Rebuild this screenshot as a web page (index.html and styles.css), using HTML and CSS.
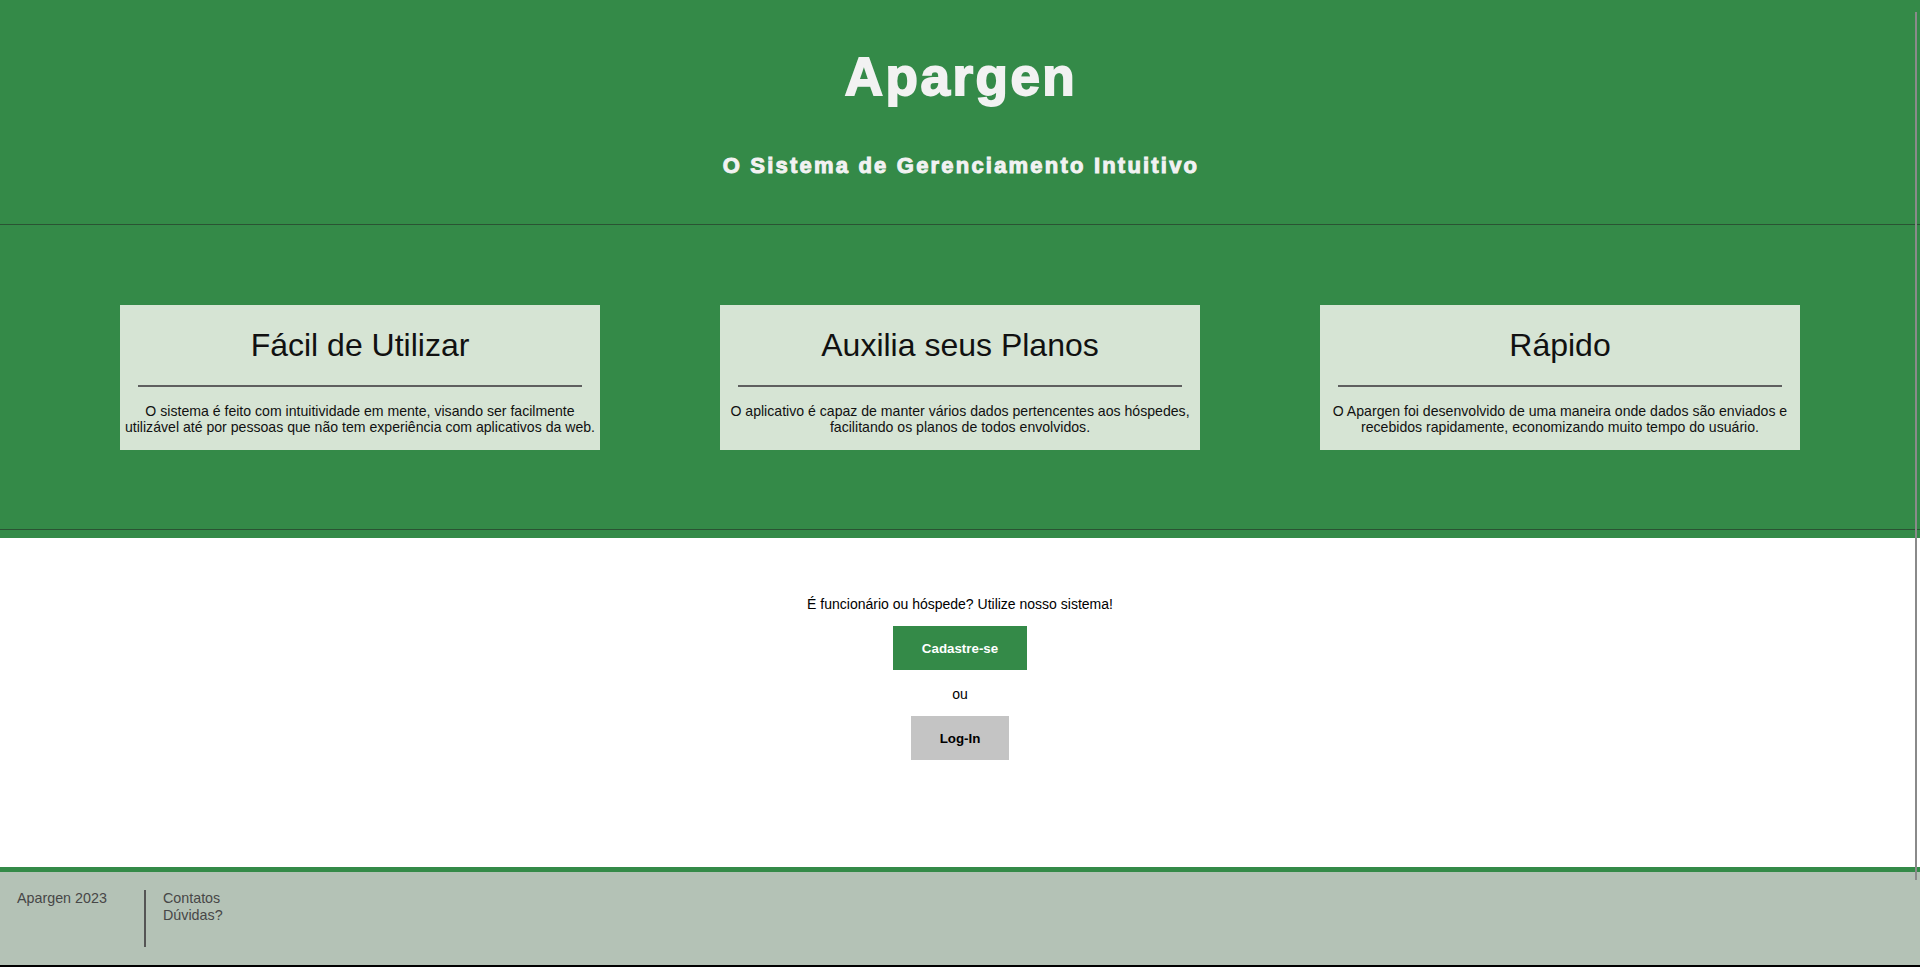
FILE: index.html
```html
<!DOCTYPE html>
<html lang="pt-BR">
<head>
<meta charset="utf-8">
<title>Apargen</title>
<link rel="stylesheet" href="styles.css">
</head>
<body>
<div class="green-wrap">
  <header class="hero">
    <h1 class="brand">Apargen</h1>
    <h2 class="tagline">O Sistema de Gerenciamento Intuitivo</h2>
  </header>
  <section class="features">
    <article class="card">
      <h3 class="card-title">Fácil de Utilizar</h3>
      <hr class="card-rule">
      <p class="card-text">O sistema é feito com intuitividade em mente, visando ser facilmente utilizável até por pessoas que não tem experiência com aplicativos da web.</p>
    </article>
    <article class="card">
      <h3 class="card-title">Auxilia seus Planos</h3>
      <hr class="card-rule">
      <p class="card-text">O aplicativo é capaz de manter vários dados pertencentes aos hóspedes, facilitando os planos de todos envolvidos.</p>
    </article>
    <article class="card">
      <h3 class="card-title">Rápido</h3>
      <hr class="card-rule">
      <p class="card-text">O Apargen foi desenvolvido de uma maneira onde dados são enviados e recebidos rapidamente, economizando muito tempo do usuário.</p>
    </article>
  </section>
</div>
<main class="cta">
  <p class="cta-text">É funcionário ou hóspede? Utilize nosso sistema!</p>
  <button class="btn btn-primary">Cadastre-se</button>
  <p class="cta-or">ou</p>
  <button class="btn btn-secondary">Log-In</button>
</main>
<footer class="footer">
  <div class="footer-col footer-brand">Apargen 2023</div>
  <div class="footer-col footer-links">
    <span>Contatos</span>
    <span>Dúvidas?</span>
  </div>
</footer>
<div class="scroll-line"></div>
</body>
</html>
```
FILE: styles.css
```css
* { box-sizing: border-box; }

html, body {
  margin: 0;
  padding: 0;
  background: #ffffff;
  font-family: "Liberation Sans", Arial, sans-serif;
}

.green-wrap {
  background: #348a48;
  padding-bottom: 8px;
}

.hero {
  display: flex;
  flex-direction: column;
  align-items: center;
  padding: 46px 0 45px;
  border-bottom: 1px solid #2a5333;
  color: #f2f2f2;
}

.brand {
  margin: 0 0 0 2px;
  font-size: 53px;
  line-height: 61px;
  font-weight: 700;
  letter-spacing: 2.5px;
  -webkit-text-stroke: 1.8px #f2f2f2;
}

.tagline {
  margin: 46px 0 0 2px;
  font-size: 22px;
  line-height: 26px;
  font-weight: 700;
  letter-spacing: 2.2px;
  -webkit-text-stroke: 1px #f2f2f2;
}

.features {
  display: flex;
  justify-content: center;
  gap: 120px;
  padding: 80px 0 79px;
  border-bottom: 1px solid #2a5333;
}

.card {
  width: 480px;
  height: 145px;
  background: #d6e4d4;
  padding: 22px 4px 0;
  display: flex;
  flex-direction: column;
  align-items: center;
  color: #111;
}

.card-title {
  margin: 0;
  font-size: 32px;
  line-height: 37px;
  font-weight: 400;
}

.card-rule {
  width: 94%;
  margin: 21px 0 0;
  border: 0;
  height: 2px;
  background: #5f5f5f;
}

.card-text {
  margin: 16px 0 0;
  font-size: 14.1px;
  line-height: 16px;
  text-align: center;
}

.cta {
  display: flex;
  flex-direction: column;
  align-items: center;
  padding: 58px 0 107px;
  color: #000;
  font-size: 14px;
  line-height: 16px;
}

.cta-text { margin: 0 0 14px; }
.cta-or { margin: 16px 0 14px; }

.btn {
  border: 0;
  margin: 0;
  height: 44px;
  padding: 1px 29px 0;
  font-family: "Liberation Sans", Arial, sans-serif;
  font-size: 13.333px;
  font-weight: 700;
  line-height: 16px;
}

.btn-primary { background: #348a48; color: #fff; }
.btn-secondary { background: #c4c4c4; color: #000; }

.footer {
  display: flex;
  background: #b4c2b6;
  border-top: 5px solid #348a48;
  border-bottom: 2px solid #000;
  padding: 18px 0 18px 17px;
  color: #474747;
  font-size: 14.3px;
  line-height: 17px;
}

.footer-brand { width: 127px; }

.footer-links {
  display: flex;
  flex-direction: column;
  height: 57px;
  border-left: 2px solid #555;
  padding-left: 17px;
}

.scroll-line {
  position: fixed;
  left: 1915px;
  top: 12px;
  width: 2px;
  height: 868px;
  background: #8a8a8a;
}
```
